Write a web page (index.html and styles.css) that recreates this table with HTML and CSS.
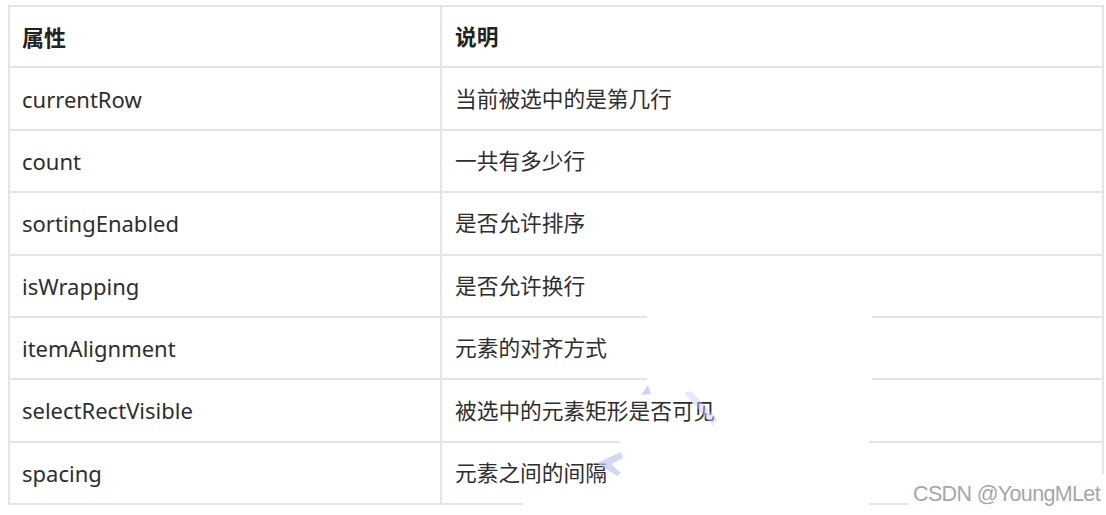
FILE: index.html
```html
<!DOCTYPE html>
<html lang="zh">
<head>
<meta charset="utf-8">
<title>属性说明</title>
<link rel="stylesheet" href="styles.css">
</head>
<body>
<div class="page">
  <div class="table">
    <div class="row head">
      <div class="cell">属性</div>
      <div class="cell">说明</div>
    </div>
    <div class="row">
      <div class="cell">currentRow</div>
      <div class="cell">当前被选中的是第几行</div>
    </div>
    <div class="row">
      <div class="cell">count</div>
      <div class="cell">一共有多少行</div>
    </div>
    <div class="row">
      <div class="cell">sortingEnabled</div>
      <div class="cell">是否允许排序</div>
    </div>
    <div class="row">
      <div class="cell">isWrapping</div>
      <div class="cell">是否允许换行</div>
    </div>
    <div class="row">
      <div class="cell">itemAlignment</div>
      <div class="cell">元素的对齐方式</div>
    </div>
    <div class="row">
      <div class="cell">selectRectVisible</div>
      <div class="cell">被选中的元素矩形是否可见</div>
    </div>
    <div class="row">
      <div class="cell">spacing</div>
      <div class="cell">元素之间的间隔</div>
    </div>
  </div>

  <div class="patch p1"></div>
  <div class="patch p2"></div>
  <div class="patch p3"></div>
  <div class="patch p4"></div>
  <svg class="marks" width="1106" height="515" viewBox="0 0 1106 515">
    <polygon points="641,395 648,385 651,394" fill="#c3c8f4" opacity="0.8"/>
    <polygon points="684,393 691,391 717,419 713,426" fill="#c9cdf5" opacity="0.45"/>
    <polygon points="597,463 621,452 623,458 611,464 621,473 617,476" fill="#c3c8f4" opacity="0.75"/>
  </svg>
  <div class="watermark">CSDN @YoungMLet</div>
</div>
</body>
</html>
```

FILE: styles.css
```css
html, body {
  margin: 0;
  padding: 0;
  background: #ffffff;
}

.page {
  position: relative;
  width: 1106px;
  height: 515px;
  overflow: hidden;
  padding: 5px 0 0 8px;
  box-sizing: border-box;
  font-family: "Noto Sans", "Noto Sans CJK SC", sans-serif;
  color: #2e2e2e;
}

.table {
  width: 1096px;
  border-top: 2px solid #e3e3e8;
  border-left: 2px solid #e3e3e8;
  box-sizing: border-box;
}

.row {
  display: grid;
  grid-template-columns: 432px 1fr;
  height: 62.375px;
}

.cell {
  display: flex;
  align-items: center;
  padding-left: 12px;
  border-right: 2px solid #e3e3e8;
  border-bottom: 2px solid #e3e3e8;
  font-size: 22px;
  line-height: 1;
  white-space: nowrap;
}

.row:first-child {
  height: 61.4px;
}

.row .cell:last-child {
  padding-left: 13px;
  font-size: 21.7px;
}

.head .cell {
  font-weight: 700;
  color: #222222;
}

.patch {
  position: absolute;
  background: #ffffff;
}

.p1 { left: 647px; top: 313px; width: 225px; height: 8px; }
.p2 { left: 647px; top: 376px; width: 225px; height: 8px; }
.p3 { left: 620px; top: 438px; width: 249px; height: 8px; }
.p4 { left: 523px; top: 500px; width: 346px; height: 10px; }

.marks {
  position: absolute;
  left: 0;
  top: 0;
  pointer-events: none;
}

.watermark {
  position: absolute;
  left: 908px;
  top: 474px;
  width: 198px;
  height: 41px;
  background: #ffffff;
  box-sizing: border-box;
  padding: 9px 0 0 5px;
  font-family: "Liberation Sans", Arial, sans-serif;
  font-size: 21.5px;
  letter-spacing: -0.65px;
  line-height: 22px;
  color: #a6a6a6;
  white-space: nowrap;
}
```
